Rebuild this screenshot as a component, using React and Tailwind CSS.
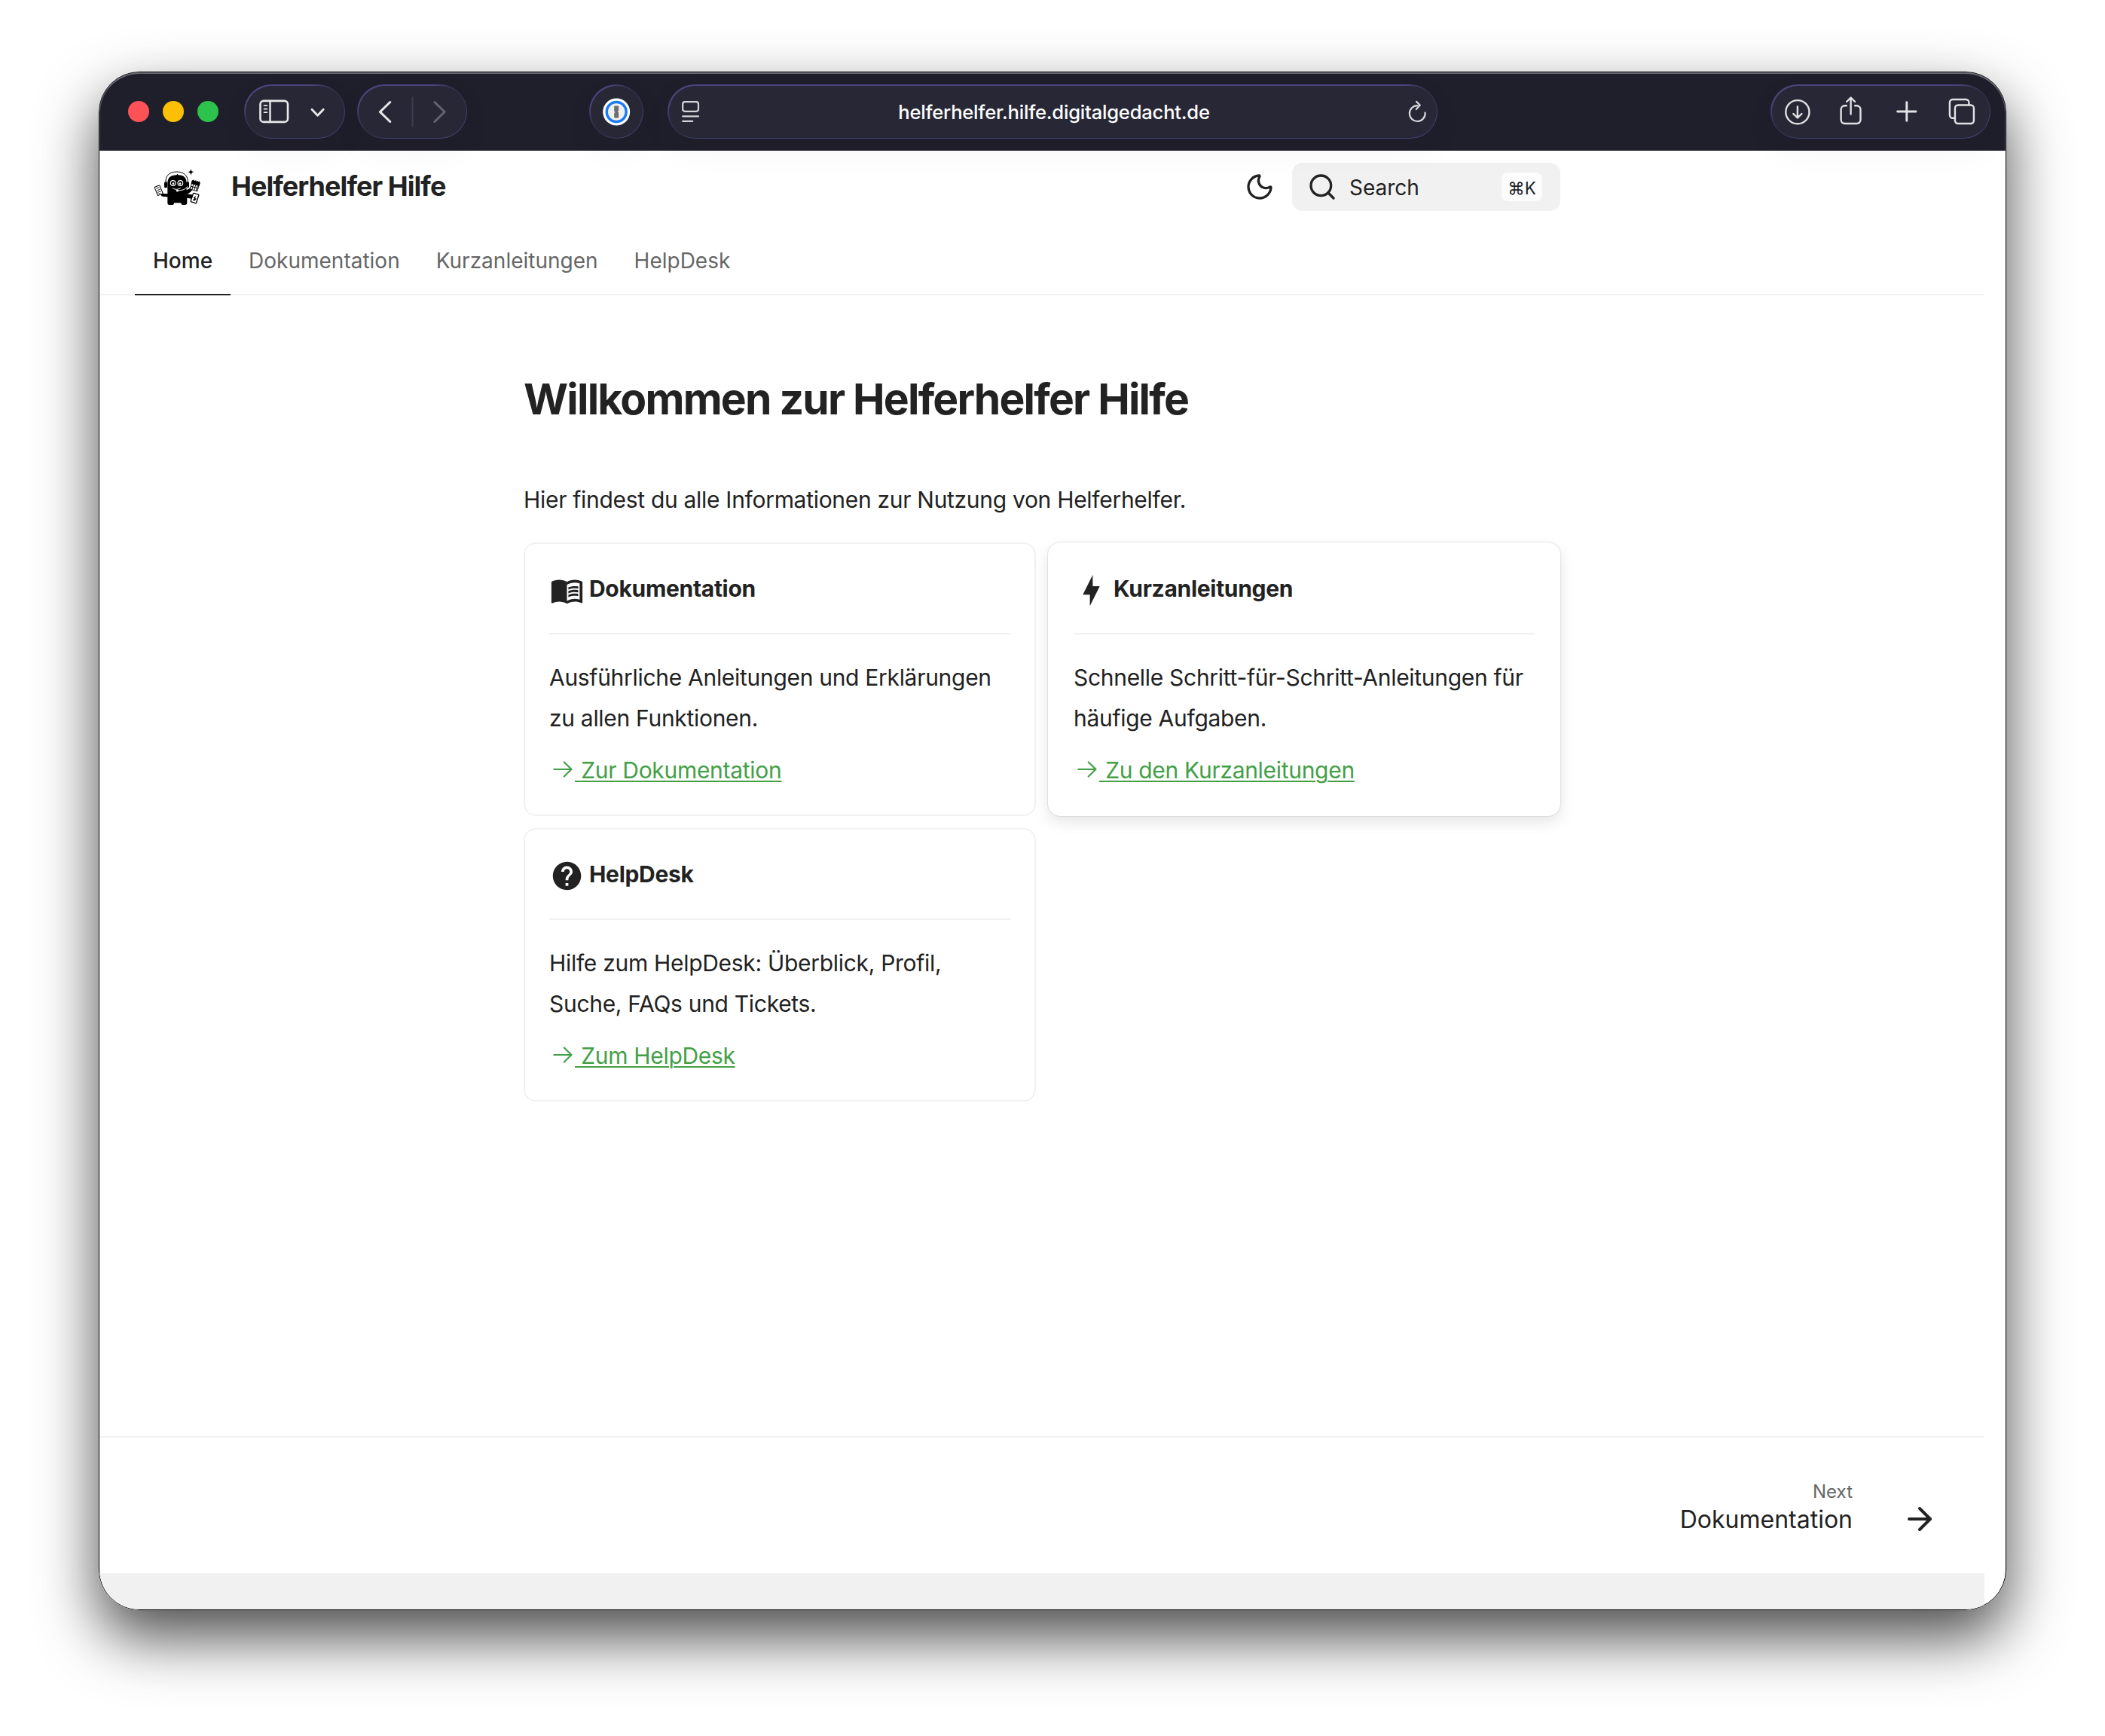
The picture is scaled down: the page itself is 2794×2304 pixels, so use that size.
import React from "react";
import { Moon, Search, ArrowRight } from "lucide-react";
import { MdMenuBook, MdHelp } from "react-icons/md";

const PILL =
  "flex h-[72px] rounded-full p-[1.5px] bg-[radial-gradient(circle_at_100%_0%,#2d2c3e_12px,transparent_44px),radial-gradient(circle_at_0%_100%,#2d2c3e_12px,transparent_44px)] bg-[#48467a] shadow-[0_16px_48px_rgba(0,0,0,0.045)]";

function Pill({ className, innerClass, children }) {
  return (
    <div className={`${PILL} ${className}`}>
      <div className={`flex flex-1 items-center rounded-full bg-[#282736] ${innerClass}`}>{children}</div>
    </div>
  );
}

function Toolbar() {
  return (
    <header className="relative z-10 flex h-[104px] items-center bg-[#1f1e2b]">
      <div className="pointer-events-none absolute inset-0 rounded-t-[53px] border-x border-t-2 border-x-[#5a5964] border-t-[#6a6974]" />
      <div className="ml-[38px] flex gap-[18px]">
        <span className="size-7 rounded-full bg-[#ff5257]" />
        <span className="size-7 rounded-full bg-[#fcbf04]" />
        <span className="size-7 rounded-full bg-[#2dc24c]" />
      </div>

      <Pill className="ml-[34px] w-[134px]">
        <svg className="size-full" viewBox="0 0 131 69" fill="none" stroke="#e9e9eb" strokeLinecap="round" strokeLinejoin="round">
          <rect x="19.5" y="19.9" width="36.5" height="28" rx="4.5" strokeWidth="2.6" />
          <path d="M32.5 20v28" strokeWidth="2.4" />
          <path d="M24.5 26.2h4M24.5 30.7h4M24.5 35.2h4" strokeWidth="1.7" />
          <path d="M88 31.3l7.6 8 7.6-8" strokeWidth="2.8" />
        </svg>
      </Pill>
      <Pill className="ml-4 w-[146px]">
        <svg className="size-full" viewBox="0 0 143 69" fill="none" strokeLinecap="round" strokeLinejoin="round">
          <path d="M41.8 21.5L28.4 34.5l13.4 13" stroke="#e9e9eb" strokeWidth="3" />
          <path d="M71.500 14.5v40" stroke="#3e3d4d" strokeWidth="2" strokeLinecap="butt" />
          <path d="M100.8 21.5l13.4 13-13.4 13" stroke="#646370" strokeWidth="3" />
        </svg>
      </Pill>
      <Pill className="ml-[162px] w-[72px]">
        <svg className="size-full" viewBox="0 0 69 69">
          <circle cx="34.2" cy="34.5" r="18" fill="#fff" />
          <circle cx="34.2" cy="34.5" r="14.7" fill="#1a7cf5" />
          <circle cx="34.2" cy="34.5" r="11.2" fill="#f0f0f0" />
          <path d="M31.2 26.5h6v6.3l-1.3 1.3 1.3 1.3v7.1h-6v-6.3l1.3-1.3-1.3-1.3z" fill="#6d6d6d" />
        </svg>
      </Pill>
      <Pill className="ml-8 w-[1022px]" innerClass="justify-between pl-[16px] pr-[12px]">
        <svg width="27" height="32" viewBox="0 0 27 32" fill="none" stroke="#d6d6da" strokeWidth="2.2" strokeLinecap="round">
          <rect x="2.2" y="3.2" width="20.8" height="12.6" rx="3" />
          <path d="M2.2 22.3h20.8M2.2 28.8h13" />
        </svg>
        <span className="pt-px text-[25.6px] font-medium leading-[32px] tracking-[-0.22px] text-white">helferhelfer.hilfe.digitalgedacht.de</span>
        <svg width="27" height="32" viewBox="0 0 27 32" fill="none" stroke="#d6d6da" strokeWidth="2.2" strokeLinecap="round" strokeLinejoin="round">
          <path d="M13.5 8.2A10.4 10.4 0 1 0 23.6 17.5" />
          <path d="M12 2.8l4.8 4.8-5 5.4" />
        </svg>
      </Pill>
      <Pill className="ml-auto mr-5 w-[292px]">
        <svg className="size-full" viewBox="0.6 0 289 69" fill="none" stroke="#e2e2e5" strokeWidth="2.4" strokeLinecap="round" strokeLinejoin="round">
          <circle cx="34.5" cy="34.7" r="15.6" />
          <path d="M34.5 27.5v14.5M28.9 37l5.6 5.4 5.6-5.4" />
          <path d="M99.5 26.3h-2.3a5 5 0 0 0-5 5V45a5 5 0 0 0 5 5h15.9a5 5 0 0 0 5-5V31.3a5 5 0 0 0-5-5h-2.3" />
          <path d="M105.2 37.5V15.8M99.7 21l5.5-5.4 5.5 5.4" />
          <path d="M167.2 34h24.4M179.4 21.8v24.4" strokeWidth="2.9" />
          <rect x="243.5" y="25.5" width="25" height="24.5" rx="4" />
          <path d="M243 42.8h-2.5a4 4 0 0 1-4-4V22a4 4 0 0 1 4-4h17.5a4 4 0 0 1 4 4v2.5" />
        </svg>
      </Pill>
    </header>
  );
}

function Mascot() {
  return (
    <svg width="90" height="70" viewBox="0 0 270 210">
      <path d="M90 98C88 66 108 54 134 54s46 14 44 44" fill="none" stroke="#000" strokeWidth="3" />
      <rect x="84" y="94" width="12" height="24" rx="5" />
      <rect x="171" y="94" width="12" height="24" rx="5" />
      <path d="M97 100c0-24 14-32 36-33l4-5 3 5c22 1 33 10 33 33v26c10-2 14-8 18-16l8 8c-4 12-12 20-24 24l26 4-4 16-22-4v20c0 6-4 8-8 8h-10c-4 0-6-4-6-8h-28c0 5-2 8-6 8h-12c-6 0-8-4-8-10v-22l-20-2c-6-2-8-6-6-12l26 2z" />
      <circle cx="119" cy="99" r="10" fill="none" stroke="#fff" strokeWidth="3.5" />
      <circle cx="148" cy="99" r="10" fill="none" stroke="#fff" strokeWidth="3.5" />
      <circle cx="120" cy="101" r="4" fill="#fff" />
      <circle cx="147" cy="101" r="4" fill="#fff" />
      <path d="M117 118c10 8 22 8 32 0" fill="none" stroke="#fff" strokeWidth="3" />
      <path d="M176 112c-6 12-20 16-38 17" fill="none" stroke="#fff" strokeWidth="3" />
      <circle cx="136" cy="129" r="4.5" fill="#fff" />
      <g transform="rotate(-22 62 128)">
        <rect x="51" y="110" width="22" height="36" rx="2" fill="#fff" stroke="#000" strokeWidth="3" />
        <path d="M55 118h14M55 126h14M55 134h14M55 141h10" stroke="#000" strokeWidth="2.5" />
      </g>
      <g transform="rotate(16 206 110)">
        <rect x="191" y="94" width="30" height="34" rx="2" fill="#fff" stroke="#000" strokeWidth="3" />
        <path d="M191 93h30v11h-30zM196 88v8M204 88v8M212 88v8M218 88v8" fill="#000" stroke="#000" strokeWidth="4" />
        <path d="M199 106v21M208 106v21M216 106v21M192 116h28" stroke="#000" strokeWidth="3" />
      </g>
      <g transform="rotate(18 205 159)">
        <rect x="194" y="141" width="23" height="36" rx="3" fill="#fff" stroke="#000" strokeWidth="4" />
        <path d="M206 149l-7 10h5l-4 10h9l4-10h-5z" fill="#000" />
      </g>
      <path d="M190 42c1 9 5 12 13 13-8 1-12 4-13 14-1-10-5-13-13-14 8-1 12-4 13-13z" />
    </svg>
  );
}

function SiteHeader() {
  const tabs = ["Home", "Dokumentation", "Kurzanleitungen", "HelpDesk"];
  return (
    <div className="border-b-2 border-[#f1f1f1]">
      <div className="flex h-24 items-center pl-[58px] pr-[563px]">
        <div className="mt-[-6px] flex">
          <Mascot />
        </div>
        <span className="-mt-[2px] ml-[27px] text-[36px] font-bold leading-[48px] tracking-[-0.95px]">Helferhelfer Hilfe</span>
        <Moon className="ml-auto" size={40} strokeWidth={2} />
        <div className="ml-[23px] flex h-16 w-[356px] items-center rounded-[14px] bg-[#f1f1f1] pl-5 pr-6">
          <Search size={40} strokeWidth={2} />
          <span className="ml-4 pt-[2px] text-[28px] leading-[40px]">Search</span>
          <kbd className="ml-auto flex h-[38px] w-[54px] items-center justify-center rounded-lg bg-[#fcfcfc] pt-[3px] font-['Inter',sans-serif] text-[22.4px] font-normal">⌘K</kbd>
        </div>
      </div>
      <nav className="-mb-[2px] flex h-24 pl-[47px] text-[28px] leading-[40px] text-[#666]">
        {tabs.map((t, i) => (
          <a
            key={t}
            className={
              i === 0
                ? "border-b-2 border-[#222] px-6 pt-[30px] font-medium text-[#222]"
                : "px-6 pt-[30px]"
            }
          >
            {t}
          </a>
        ))}
      </nav>
    </div>
  );
}

function BoltIcon() {
  return (
    <svg width="45" height="45" viewBox="0 0 24 24" fill="currentColor">
      <path d="M11 15H6l7-14v8h5l-7 14z" />
    </svg>
  );
}

function LinkArrow() {
  return (
    <svg width="34" height="34" viewBox="0 0 34 34" fill="none" stroke="currentColor" strokeWidth="2.2" strokeLinecap="round" strokeLinejoin="round">
      <path d="M6.3 17h23.2M19.8 7.5l9.7 9.5-9.7 9.5" />
    </svg>
  );
}

function Card({ icon, title, text, link, raised }) {
  return (
    <article
      className={`rounded-[16px] border-2 p-8 ${
        raised
          ? "border-transparent bg-clip-padding shadow-[0_8px_20px_rgba(0,0,0,0.1),0_0_2px_rgba(0,0,0,0.25)]"
          : "border-[#f1f1f1]"
      }`}
    >
      <div className="flex h-[54px] items-center font-bold">
        <span className="ml-px mt-[5px] flex w-[45px]">{icon}</span>
        <span className="ml-[7px]">{title}</span>
      </div>
      <hr className="mt-8 border-t-2 border-[#f1f1f1]" />
      <p className="mt-[30px]">{text}</p>
      <p className="mt-[15px] flex text-[#43a047]">
        <span className="flex w-[34px] pt-[9px]">
          <LinkArrow />
        </span>
        <a className="whitespace-pre underline decoration-2 underline-offset-[3px]">{" " + link}</a>
      </p>
    </article>
  );
}

export default function App() {
  return (
    <div className="h-[2304px] w-[2794px] overflow-hidden bg-white px-[131px] pt-[95px] font-['Inter',sans-serif] text-[#222]">
      <div className="rounded-[54px] shadow-[0_36px_80px_rgba(0,0,0,0.7)]">
        <div className="flex h-[2042px] w-[2532px] flex-col overflow-hidden rounded-[54px] border border-black bg-white">
          <Toolbar />
          <div className="flex w-[2502px] flex-1 flex-col">
            <SiteHeader />
            <main className="mx-auto w-[1376px] text-[30px] leading-[54px] tracking-[-0.3px]">
              <h1 className="mt-[99px] text-[57px] font-bold leading-[78px] tracking-[-1.8px]">Willkommen zur Helferhelfer Hilfe</h1>
              <p className="mt-[67px]">Hier findest du alle Informationen zur Nutzung von Helferhelfer.</p>
              <div className="mt-[30px] grid grid-cols-2 gap-4">
                <Card
                  icon={<MdMenuBook size={45} />}
                  title="Dokumentation"
                  text="Ausführliche Anleitungen und Erklärungen zu allen Funktionen."
                  link="Zur Dokumentation"
                />
                <Card
                  raised
                  icon={<BoltIcon />}
                  title="Kurzanleitungen"
                  text="Schnelle Schritt-für-Schritt-Anleitungen für häufige Aufgaben."
                  link="Zu den Kurzanleitungen"
                />
                <Card
                  icon={<MdHelp size={45} />}
                  title="HelpDesk"
                  text="Hilfe zum HelpDesk: Überblick, Profil, Suche, FAQs und Tickets."
                  link="Zum HelpDesk"
                />
              </div>
            </main>
            <footer className="mt-auto">
              <div className="flex h-[182px] justify-end border-t-2 border-[#f1f1f1] pr-[62px]">
                <div className="pt-[56px] text-right">
                  <div className="text-[24px] leading-[32px] text-[#666]">Next</div>
                  <div className="text-[32px] leading-[42px]">Dokumentation</div>
                </div>
                <ArrowRight className="ml-[65px] mt-[84px]" size={48} strokeWidth={2} />
              </div>
              <div className="h-12 bg-[#f1f1f1]" />
            </footer>
          </div>
        </div>
      </div>
    </div>
  );
}
